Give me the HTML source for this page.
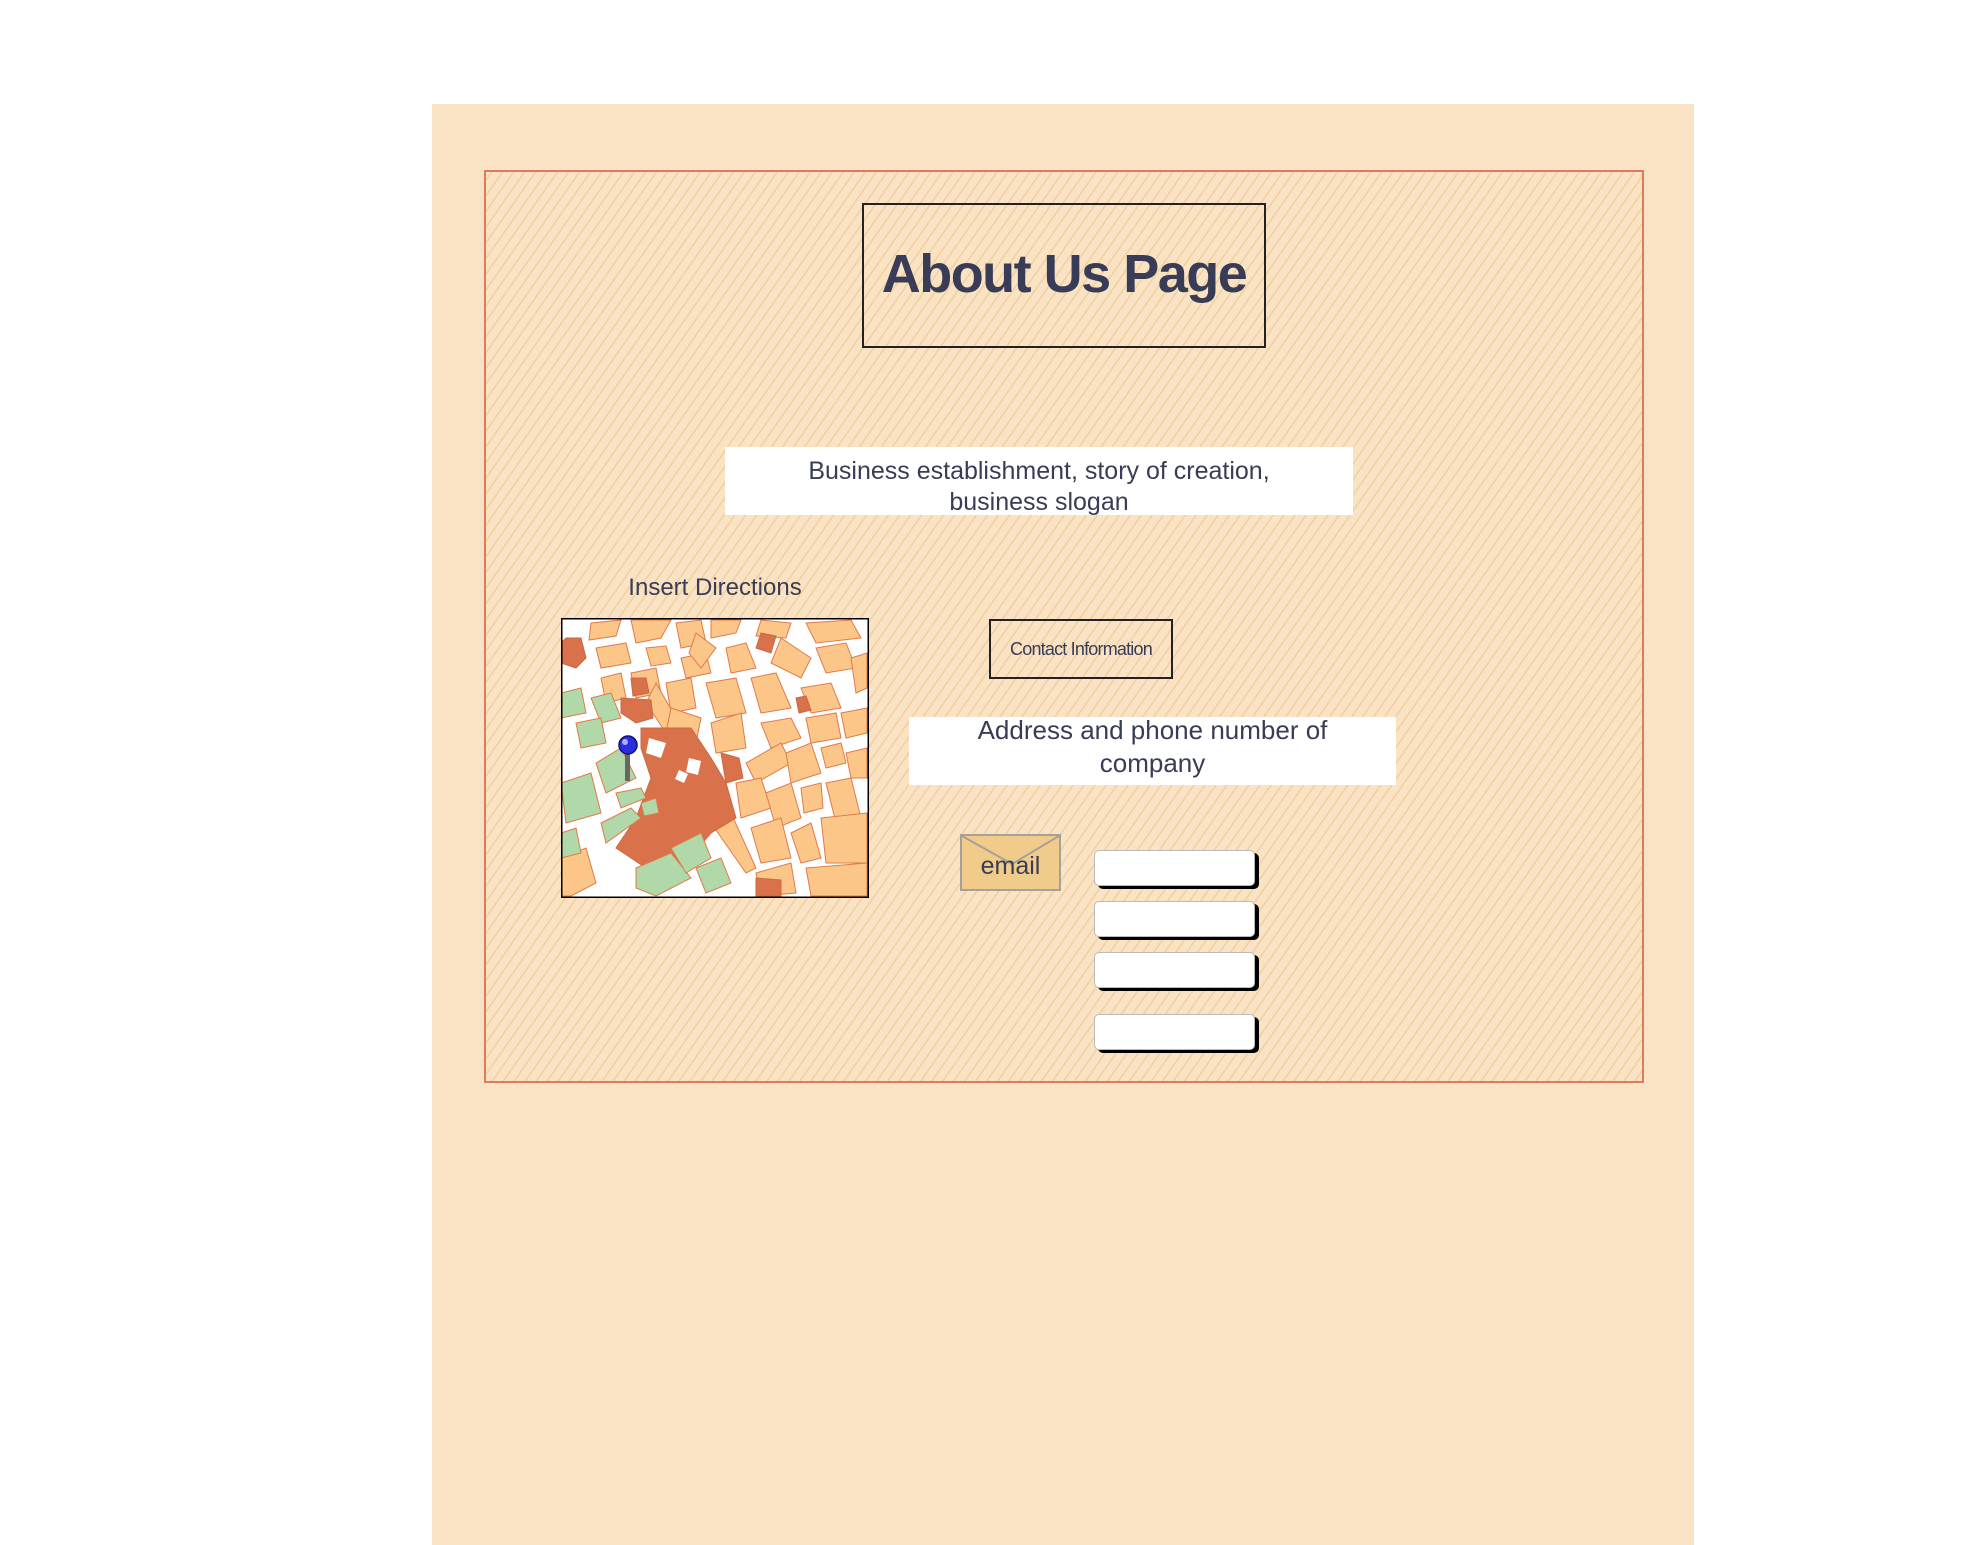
<!DOCTYPE html>
<html><head><meta charset="utf-8"><style>
html,body{margin:0;padding:0;background:#fff;width:1980px;height:1545px;overflow:hidden;font-family:"Liberation Sans",sans-serif;color:#393c56}
.abs{position:absolute}
#bg{left:432px;top:104px;width:1262px;height:1441px;background:#f9e3c4}
#outer{left:484px;top:170px;width:1160px;height:913px;border:2px solid #e07a5f;box-sizing:border-box;
background:#f9e3c4 repeating-linear-gradient(-55deg,rgba(240,200,140,.0) 0 5px,rgba(238,200,140,.7) 5px 6.5px,rgba(240,200,140,0) 6.5px 9px)}
.box{border:2px solid #222;box-sizing:border-box;display:flex;align-items:center;justify-content:center;text-align:center}
.white{background:#fff;display:flex;align-items:center;justify-content:center;text-align:center}
.btn{width:161px;height:36px;background:#fff;border:1px solid #bbb;border-radius:5px;box-shadow:4px 3px 0 #000;box-sizing:border-box}
</style></head><body>
<div id="bg" class="abs"></div>
<div id="outer" class="abs"></div>
<div class="abs box" style="left:862px;top:203px;width:404px;height:145px;font-size:54px;font-weight:bold;letter-spacing:-1.5px;"><span style="margin-top:-4px">About Us Page</span></div>
<div class="abs white" style="left:725px;top:447px;width:628px;height:68px;font-size:25px;line-height:31px;"><div style="margin-top:12px">Business establishment, story of creation,<br>business slogan</div></div>
<div class="abs" style="left:565px;top:574px;width:300px;text-align:center;font-size:24px;">Insert Directions</div>
<div class="abs box" style="left:989px;top:619px;width:184px;height:60px;font-size:18px;letter-spacing:-0.8px;">Contact Information</div>
<div class="abs white" style="left:909px;top:717px;width:487px;height:68px;font-size:26px;line-height:33px;align-items:flex-start;"><div style="margin-top:-3px">Address and phone number of<br>company</div></div>
<div class="abs" style="left:960px;top:834px;width:101px;height:57px;background:#f1cb8a;border:2px solid #a6a09a;box-sizing:border-box;">
<svg width="97" height="53" style="position:absolute;left:0;top:0"><path d="M0 0 L50 28 L97 0" stroke="#a6a09a" stroke-width="2" fill="none"/></svg>
<div style="position:absolute;left:0;right:0;top:16px;text-align:center;font-size:25px;">email</div></div>
<div class="abs btn" style="left:1094px;top:850px"></div>
<div class="abs btn" style="left:1094px;top:901px"></div>
<div class="abs btn" style="left:1094px;top:952px"></div>
<div class="abs btn" style="left:1094px;top:1014px"></div>
<svg class="abs" style="left:561px;top:618px" width="308" height="280" viewBox="0 0 308 280">
<rect x="0" y="0" width="308" height="280" fill="#fff"/>
<g fill="#fdc689" stroke="#e07a4a" stroke-width="1">
<polygon points="30,5 60,2 55,18 28,22"/><polygon points="70,2 110,2 100,20 75,25"/><polygon points="115,5 140,2 145,25 120,30"/>
<polygon points="150,2 180,2 175,15 150,20"/><polygon points="200,2 230,5 225,20 195,18"/><polygon points="245,5 290,2 300,20 255,25"/>
<polygon points="35,30 65,25 70,45 40,50"/><polygon points="85,30 105,28 110,45 90,48"/><polygon points="120,40 145,35 150,55 125,60"/>
<polygon points="135,15 155,30 140,50 128,35"/><polygon points="165,30 185,25 195,50 170,55"/><polygon points="220,20 250,40 240,60 210,45"/>
<polygon points="255,30 285,25 295,50 265,55"/><polygon points="290,40 306,35 306,70 295,75"/><polygon points="40,60 60,55 65,80 45,85"/>
<polygon points="70,55 95,50 100,75 75,80"/><polygon points="105,65 130,60 135,90 110,95"/><polygon points="145,65 175,60 185,95 155,100"/>
<polygon points="190,60 215,55 230,90 200,95"/><polygon points="240,70 270,65 280,90 250,95"/><polygon points="280,95 306,90 306,115 285,120"/>
<polygon points="95,65 115,100 105,115 85,85"/><polygon points="110,90 140,100 135,125 105,115"/><polygon points="150,105 180,95 185,130 155,135"/>
<polygon points="200,105 230,100 240,120 210,130"/><polygon points="245,100 275,95 280,120 250,125"/><polygon points="185,145 220,125 230,145 195,165"/>
<polygon points="225,135 250,125 260,155 230,165"/><polygon points="260,130 280,125 285,145 265,150"/><polygon points="285,135 306,130 306,160 290,160"/>
<polygon points="175,165 200,160 210,190 180,200"/><polygon points="205,175 230,165 240,200 215,210"/><polygon points="240,170 260,165 262,190 243,195"/>
<polygon points="265,165 290,160 300,200 275,205"/><polygon points="190,210 220,200 230,240 200,245"/><polygon points="230,215 250,205 260,240 240,245"/>
<polygon points="260,200 306,195 306,245 265,245"/><polygon points="195,255 230,245 235,275 200,278"/><polygon points="245,250 306,245 306,278 250,278"/>
<polygon points="150,205 170,195 195,250 185,255"/><polygon points="0,240 25,230 35,265 10,278 0,278"/>
</g>
<g fill="#d9714a" stroke="#c96a42" stroke-width="1">
<polygon points="5,20 20,20 25,40 15,50 0,45 0,25"/><polygon points="70,60 85,60 88,75 72,78"/><polygon points="200,15 215,18 210,35 195,30"/>
<polygon points="235,80 245,78 250,92 238,95"/><polygon points="60,80 90,82 92,100 75,105 60,95"/>
<polygon points="80,110 130,110 150,140 165,165 175,200 150,215 120,250 100,260 55,230 75,200 90,160 80,130"/>
<polygon points="160,135 178,140 182,160 165,165"/><polygon points="195,260 220,262 220,278 195,278"/>
</g>
<g fill="#fff"><polygon points="88,120 105,125 100,140 85,135"/><polygon points="128,140 140,143 137,157 125,154"/><polygon points="118,152 127,156 123,165 114,161"/></g>
<g fill="#b0d8a8" stroke="#e07a4a" stroke-width="1">
<polygon points="0,75 20,70 25,95 0,100"/><polygon points="30,80 50,75 60,100 40,105"/><polygon points="15,105 40,100 45,125 20,130"/>
<polygon points="35,145 60,130 75,160 45,175"/><polygon points="0,165 30,155 40,195 5,205"/><polygon points="55,175 80,170 85,180 60,190"/>
<polygon points="40,205 70,190 80,200 45,225"/><polygon points="80,185 95,180 98,195 83,198"/><polygon points="0,215 15,210 20,235 0,240"/>
<polygon points="75,250 110,235 130,260 95,278 75,270"/><polygon points="110,230 140,215 150,240 125,255"/><polygon points="135,250 160,240 170,265 145,275"/>
</g>
<rect x="0" y="0" width="308" height="280" fill="none" stroke="#000" stroke-width="3"/>
<rect x="64" y="130" width="5" height="33" fill="#666"/>
<circle cx="67" cy="127" r="9" fill="#2d2de0" stroke="#10107a" stroke-width="1.5"/>
<circle cx="64" cy="124" r="3" fill="#aab0ff"/>
</svg>
</body></html>
